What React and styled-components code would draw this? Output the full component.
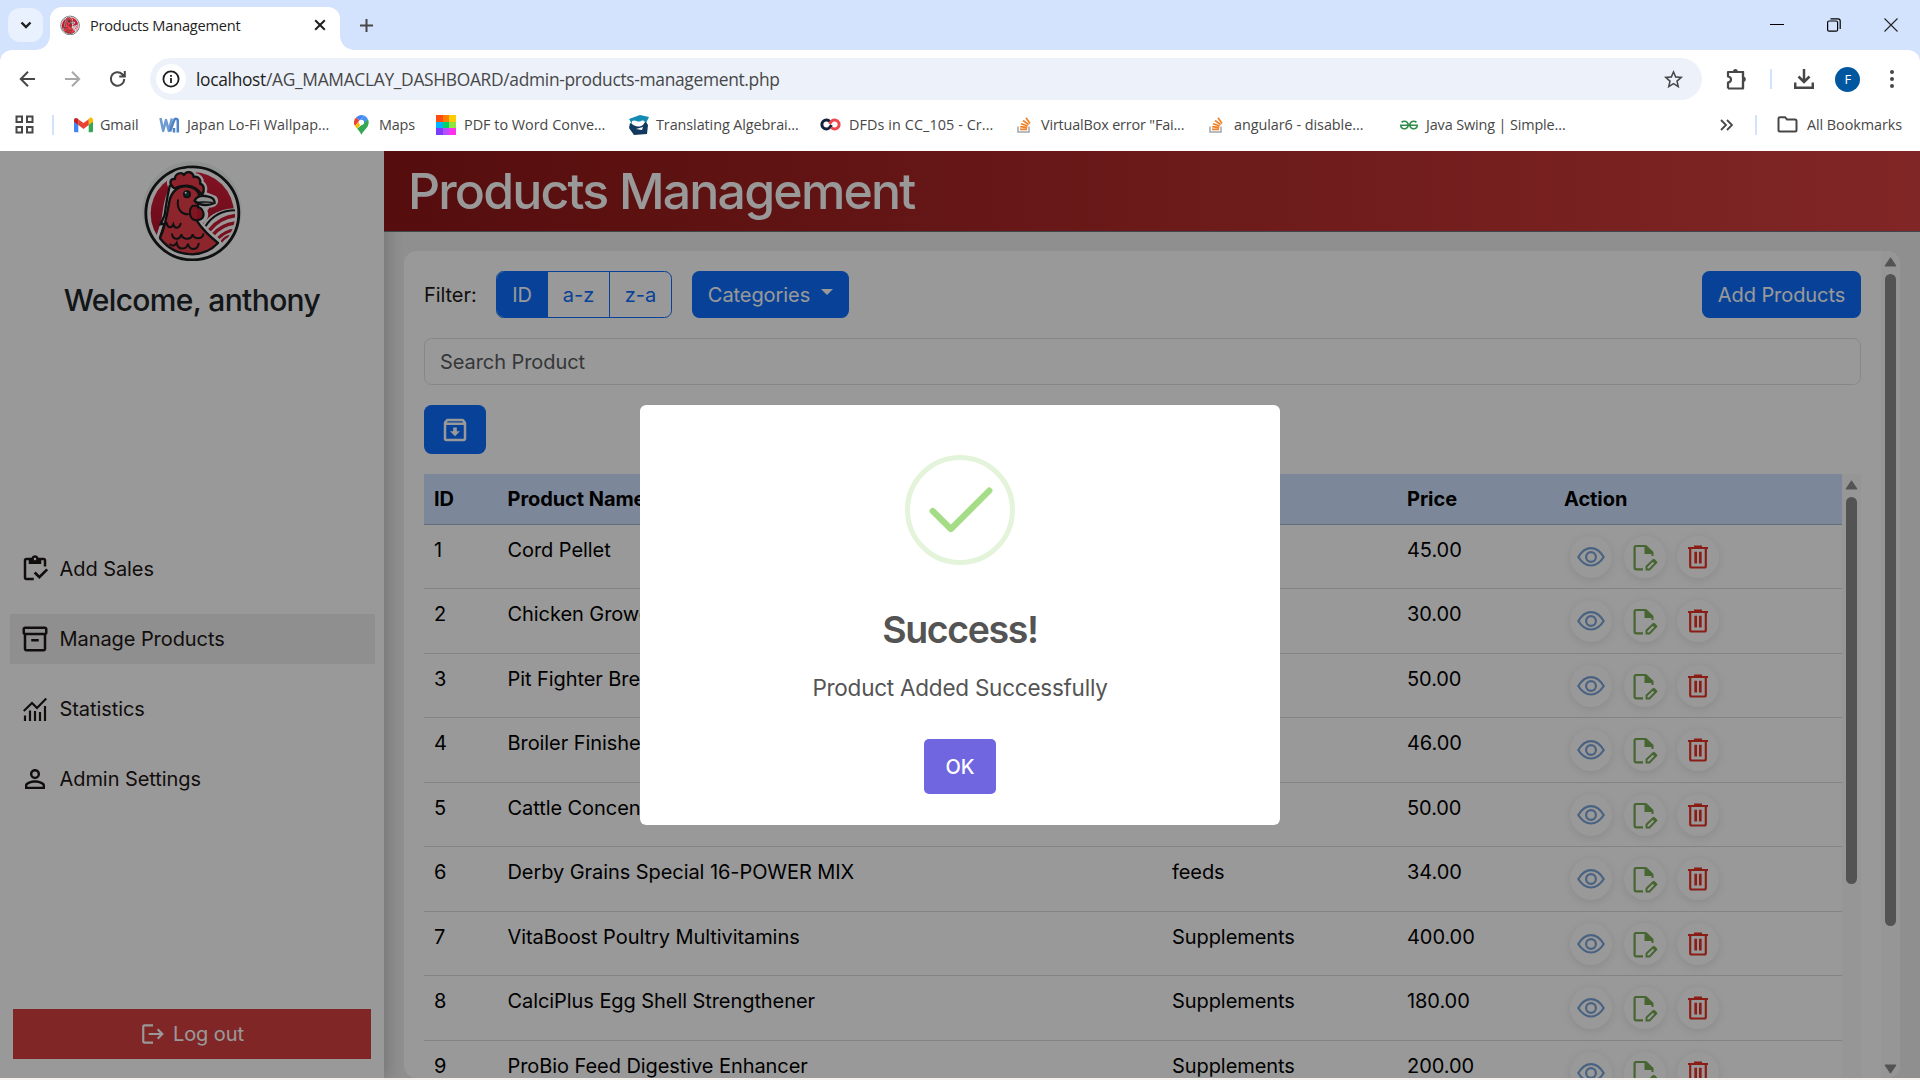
import React from "react";
import styled, { createGlobalStyle, css } from "styled-components";
import {
  MdOutlineInventory,
  MdOutlineInventory2,
  MdPersonOutline,
  MdOutlineArchive,
  MdLogout,
  MdStarBorder,
} from "react-icons/md";
import { SiGeeksforgeeks } from "react-icons/si";

const Global = createGlobalStyle`
  *, *::before, *::after { box-sizing: border-box; }
  body { margin: 0; overflow: hidden; background: #f5f1ee; }
  svg { display: block; flex: none; }
`;

const UI_FONT = '"Open Sans", "Noto Sans", sans-serif';

const Screen = styled.div`
  width: 1920px;
  height: 1080px;
  display: flex;
  flex-direction: column;
  overflow: hidden;
`;

/* ---------- browser chrome ---------- */
const Chrome = styled.header`
  height: 151px;
  flex: none;
  background: #d3e3fd;
  font-family: ${UI_FONT};
  color: #1f1f1f;
`;
const TabStrip = styled.div`
  height: 50px;
  display: flex;
  align-items: center;
  padding-left: 8px;
`;
const TabSearch = styled.div`
  width: 35px;
  height: 34px;
  border-radius: 12px;
  background: #e9f1fe;
  display: grid;
  place-items: center;
`;
const Tab = styled.div`
  position: relative;
  align-self: flex-end;
  width: 290px;
  height: 43px;
  margin-left: 7px;
  padding: 0 14px 7px 10px;
  display: flex;
  align-items: center;
  gap: 10px;
  background: #fff;
  border-radius: 12px 12px 0 0;
  &::before,
  &::after {
    content: "";
    position: absolute;
    bottom: 0;
    width: 14px;
    height: 14px;
  }
  &::before {
    left: -14px;
    background: radial-gradient(circle at 0 0, transparent 13.5px, #fff 14px);
  }
  &::after {
    right: -14px;
    background: radial-gradient(circle at 100% 0, transparent 13.5px, #fff 14px);
  }
`;
const TabTitle = styled.span`
  flex: 1;
  font-size: 14.6px;
  letter-spacing: -0.22px;
  white-space: nowrap;
`;
const NewTab = styled.div`
  margin-left: 19px;
`;
const WindowButtons = styled.div`
  margin-left: auto;
  padding-right: 22px;
  display: flex;
  align-items: center;
  gap: 43px;
`;
const ChromeBody = styled.div`
  height: 101px;
  background: #fff;
  border-radius: 12px 12px 0 0;
`;
const Toolbar = styled.div`
  height: 58px;
  display: flex;
  align-items: center;
  padding: 0 18px 0 16px;
`;
const NavButtons = styled.div`
  width: 134px;
  display: flex;
  gap: 21px;
`;
const Omnibox = styled.div`
  width: 1552px;
  height: 42px;
  border-radius: 21px;
  background: #ecf1fa;
  display: flex;
  align-items: center;
  padding: 0 17px 0 6px;
`;
const SiteInfo = styled.div`
  width: 30px;
  height: 30px;
  border-radius: 50%;
  background: #fff;
  display: grid;
  place-items: center;
  margin-right: 10px;
`;
const Url = styled.span`
  flex: 1;
  font-size: 17.4px;
  letter-spacing: -0.32px;
  color: #474747;
  white-space: nowrap;
  b {
    font-weight: 400;
    color: #1f1f1f;
  }
`;
const ToolbarRight = styled.div`
  flex: 1;
  display: flex;
  align-items: center;
  justify-content: space-between;
  padding-left: 22px;
`;
const Separator = styled.i`
  width: 2px;
  height: 20px;
  background: #d3e3fd;
`;
const Avatar = styled.div`
  width: 25px;
  height: 25px;
  border-radius: 50%;
  background: #00579f;
  color: #fff;
  font-size: 13px;
  display: grid;
  place-items: center;
`;
const Bookmarks = styled.nav`
  height: 33px;
  display: flex;
  align-items: center;
  padding: 0 18px 0 15px;
  font-size: 14.4px;
  color: #474747;
`;
const AppsArea = styled.div`
  width: 59px;
  display: flex;
  align-items: center;
  gap: 18px;
`;
const Bookmark = styled.div`
  width: ${(p) => p.$w}px;
  display: flex;
  align-items: center;
  white-space: nowrap;
  letter-spacing: ${(p) => p.$spacing}px;
`;
const BookmarkIcon = styled.span`
  width: ${(p) => p.$w}px;
`;
const BookmarksEnd = styled.div`
  margin-left: auto;
  display: flex;
  align-items: center;
  white-space: nowrap;
  letter-spacing: -0.07px;
  svg:first-child { margin-right: 22px; }
  ${Separator} { margin-right: 20px; }
  span { margin-left: 9px; }
`;

/* ---------- page ---------- */
const Page = styled.div`
  position: relative;
  height: 927px;
  flex: none;
  display: flex;
  overflow: hidden;
  background: #eee;
  font-family: Inter, "Liberation Sans", sans-serif;
  font-size: 20px;
  line-height: 30px;
  letter-spacing: -0.07px;
  color: #1d1616;
`;
const Sidebar = styled.aside`
  width: 384px;
  flex: none;
  background: #fff;
  box-shadow: 3px 0 15px rgba(0, 0, 0, 0.2);
  display: flex;
  flex-direction: column;
  align-items: center;
  padding: 10px 0 19px;
`;
const Welcome = styled.h4`
  margin: 21px 0 0;
  font-size: 30px;
  line-height: 36px;
  letter-spacing: -0.64px;
  font-weight: 500;
  color: #212529;
`;
const Menu = styled.nav`
  width: 365px;
  margin-top: 226px;
  display: flex;
  flex-direction: column;
  gap: 20px;
`;
const MenuItem = styled.a`
  height: 50px;
  display: flex;
  align-items: center;
  gap: 10px;
  padding-left: 10px;
  background: ${(p) => (p.$active ? "#eee" : "transparent")};
`;
const MenuIcon = styled.span`
  width: 30px;
  display: grid;
  place-items: center;
`;
const Logout = styled.a`
  width: 358px;
  height: 50px;
  margin-top: auto;
  background: #d84040;
  color: #fff;
  display: flex;
  align-items: center;
  justify-content: center;
  gap: 7px;
`;
const Main = styled.main`
  flex: 1;
  display: flex;
  flex-direction: column;
`;
const Banner = styled.div`
  position: relative;
  height: 81px;
  flex: none;
  padding-left: 24px;
  border-bottom: 1px solid #6c757d;
  background: linear-gradient(90deg, #8e1616, #d84040);
  color: #fff;
`;
const BannerTitle = styled.h1`
  margin: 10px 0 0;
  font-size: 50px;
  line-height: 60px;
  letter-spacing: -1.82px;
  font-weight: 500;
`;
const Card = styled.section`
  height: 827px;
  margin: 19px 20px 0;
  border-radius: 12.5px;
  background: #fff;
  display: flex;
  overflow: hidden;
`;
const CardBody = styled.div`
  flex: 1;
  padding: 20px 20px 0;
  display: flex;
  flex-direction: column;
  gap: 20px;
`;
const FilterBar = styled.div`
  height: 47px;
  display: flex;
  align-items: center;
`;
const blueButton = css`
  background: #0d6efd;
  color: #fff;
  border-radius: 7.5px;
  display: flex;
  align-items: center;
  justify-content: center;
`;
const ButtonGroup = styled.div`
  width: 176px;
  height: 47px;
  margin: 0 20px;
  display: flex;
  border: 1px solid #0d6efd;
  border-radius: 7.5px;
  overflow: hidden;
`;
const GroupButton = styled.span`
  width: ${(p) => p.$w}px;
  display: grid;
  place-items: center;
  background: ${(p) => (p.$active ? "#0d6efd" : "transparent")};
  color: ${(p) => (p.$active ? "#fff" : "#0d6efd")};
  & + & { border-left: 1px solid #0d6efd; }
`;
const FilterLabel = styled.span`
  width: 52px;
`;
const Categories = styled.div`
  ${blueButton}
  width: 157px;
  height: 47px;
  gap: 11px;
  &::after {
    content: "";
    margin-top: -5px;
    border: 6px solid transparent;
    border-top-color: #fff;
    border-bottom: 0;
  }
`;
const AddProducts = styled.div`
  ${blueButton}
  width: 159px;
  height: 47px;
  margin-left: auto;
`;
const Search = styled.div`
  height: 47px;
  border: 1px solid #dee2e6;
  border-radius: 7.5px;
  padding: 8px 15px;
  color: #595c5f;
`;
const ArchiveButton = styled.div`
  ${blueButton}
  width: 62px;
  height: 49px;
`;
const TableArea = styled.div`
  flex: 1;
  display: flex;
  min-height: 0;
  color: #000;
`;
const Table = styled.div`
  flex: 1;
`;
const Row = styled.div`
  height: ${(p) => (p.$head ? 50.5 : 64.55)}px;
  display: grid;
  grid-template-columns: 73.5px 664.5px 235px 157px 1fr;
  padding-top: 10px;
  border-bottom: 1px solid ${(p) => (p.$head ? "#a6b5cc" : "#d8dde2")};
  background: ${(p) => (p.$head ? "#cfe2ff" : "transparent")};
  font-weight: ${(p) => (p.$head ? 700 : 400)};
`;
const Cell = styled.div`
  padding-left: 10px;
  height: 30px;
  white-space: nowrap;
`;
const Actions = styled.div`
  display: flex;
  gap: 11.5px;
  padding: 1px 0 0 16px;
`;
const RoundAction = styled.span`
  width: 42px;
  height: 42px;
  border-radius: 50%;
  background: #fff;
  box-shadow: 0 2px 10px rgba(0, 0, 0, 0.1);
  display: grid;
  place-items: center;
`;
const Scrollbar = styled.div`
  width: 19px;
  flex: none;
  background: #fafafa;
  display: flex;
  flex-direction: column;
  align-items: center;
  padding: ${(p) => p.$pt}px 0 4px;
`;
const Thumb = styled.i`
  width: 11px;
  height: ${(p) => p.$h}px;
  margin-top: 7px;
  margin-bottom: auto;
  border-radius: 6px;
  background: #8b8b8b;
`;

/* ---------- dialog ---------- */
const Backdrop = styled.div`
  position: absolute;
  inset: 0;
  background: rgba(0, 0, 0, 0.4);
  display: flex;
  justify-content: center;
  align-items: flex-start;
  padding-top: 254px;
`;
const Dialog = styled.div`
  width: 640px;
  height: 420px;
  padding-top: 50px;
  border-radius: 6.25px;
  background: #fff;
  color: #545454;
  display: flex;
  flex-direction: column;
  align-items: center;
`;
const DialogTitle = styled.h2`
  margin: 42px 0 0;
  font-size: 37.5px;
  line-height: 45px;
  letter-spacing: -1.35px;
  font-weight: 600;
`;
const DialogText = styled.p`
  margin: 19px 0 0;
  font-size: 22.5px;
  line-height: 34px;
  letter-spacing: -0.24px;
`;
const OkButton = styled.div`
  width: 72px;
  height: 55px;
  margin-top: 34px;
  border-radius: 5px;
  background: #7066e0;
  color: #fff;
  font-weight: 500;
  display: grid;
  place-items: center;
`;

/* ---------- drawings ---------- */
const Rooster = ({ size }) => (
  <svg width={size} height={size} viewBox="66 18 300 300">
    <defs>
      <clipPath id="disc"><circle cx="217" cy="176" r="129" /></clipPath>
      <linearGradient id="redBg" x1="0" y1="0" x2="0" y2="1">
        <stop offset="0" stopColor="#d81f3c" />
        <stop offset="1" stopColor="#a80f26" />
      </linearGradient>
    </defs>
    <circle cx="216" cy="168" r="149" fill="#f0f2f2" />
    <circle cx="217" cy="175" r="139.500" fill="#fff" stroke="#191c1d" strokeWidth="8.500" />
    <circle cx="217" cy="176" r="125" fill="url(#redBg)" />
    <g clipPath="url(#disc)">
      <path d="M232 250C244 190 290 160 352 160V250L296 290Z" fill="#fff" />
      <path d="M256 214C276 184 306 166 345 166" fill="none" stroke="#191c1d" strokeWidth="6" />
      <g fill="none" stroke="#c81c36" strokeWidth="11">
        <path d="M268 226C286 204 310 186 345 182" />
        <path d="M278 240C294 221 314 208 345 204" />
        <path d="M294 250C306 239 320 228 340 226" strokeWidth="9" />
        <path d="M304 260C312 250 322 243 334 242" strokeWidth="7" />
      </g>
    </g>
    <path d="M160 98C146 86 150 70 165 72C165 54 185 50 192 60C200 46 219 50 221 66C234 62 244 74 240 86C254 90 254 108 246 118L282 132C288 144 276 148 262 148C258 158 250 160 252 170C258 184 250 197 232 198C250 228 274 246 292 260L270 286L217 298L160 285L118 250L134 200C140 170 138 135 160 98Z" stroke="#fff" strokeWidth="21" strokeLinejoin="round" fill="#fff" />
    <path d="M150 90C142 120 138 150 134 180L122 208L134 206L120 248" fill="none" stroke="#191c1d" strokeWidth="7" />
    <g stroke="#191c1d" strokeWidth="7" strokeLinejoin="round">
      <path d="M120 250C136 214 142 176 148 140C154 108 176 92 200 94C224 96 236 108 240 126L226 190C246 224 270 244 294 264C270 290 245 297 217 298C178 296 148 286 120 250Z" fill="#ec3f4a" />
      <path d="M160 98C146 86 150 70 165 72C165 54 185 50 192 60C200 46 219 50 221 66C234 62 244 74 240 86C254 90 254 108 246 120C236 104 222 94 202 92C186 92 174 94 166 100Z" fill="#ee3b49" />
      <path d="M224 136C232 122 246 120 262 124C276 126 284 134 284 144C268 152 244 154 224 138Z" fill="#eee" />
      <path d="M226 144C244 138 262 142 278 142" fill="none" strokeWidth="4" />
      <path d="M218 152C204 164 208 192 226 196C242 196 240 166 232 152Z" fill="#d62438" strokeWidth="6" />
      <path d="M234 156C246 158 256 176 248 188C244 194 238 196 232 194" fill="#c41b31" strokeWidth="6" />
    </g>
    <circle cx="201" cy="118" r="12" fill="#191c1d" />
    <circle cx="201" cy="118" r="7" fill="#173c42" />
    <circle cx="197" cy="113" r="3" fill="#fff" />
    <g fill="none" stroke="#191c1d" strokeWidth="6" strokeLinecap="round">
      <path d="M174 136C170 158 182 178 204 178" />
      <path d="M140 204C142 218 154 222 160 208C164 224 178 220 182 206" />
      <path d="M156 238C160 256 180 256 184 238C188 256 214 256 218 238C222 254 246 254 250 238" />
      <path d="M150 268C156 274 166 272 170 264C174 286 200 286 204 266C208 288 234 286 236 266" />
    </g>
  </svg>
);

const Stroke = ({ w, h, sw = 2, color = "#474747", children, ...rest }) => (
  <svg width={w} height={h} viewBox={`0 0 ${w} ${h}`} fill="none" stroke={color} strokeWidth={sw} {...rest}>
    {children}
  </svg>
);

const Gmail = () => (
  <svg width="19" height="16" viewBox="0 0 19 16">
    <path d="M0 3V14a1.3 1.3 0 0 0 1.3 1.3H4.3V6Z" fill="#4285f4" />
    <path d="M19 3V14a1.3 1.3 0 0 1-1.3 1.3H14.7V6Z" fill="#34a853" />
    <path d="M14.7 2.2V8L19 4.8V3c0-2.2-2-3.2-3.6-2Z" fill="#fbbc04" />
    <path d="M4.3 8V2.2L9.5 6l5.2-3.8V8L9.5 12Z" fill="#ea4335" />
    <path d="M0 3V4.8L4.3 8V2.2L3.6 1.6C2 .4 0 1.300 0 3Z" fill="#c5221f" />
  </svg>
);
const WaveMark = () => (
  <Stroke w={21} h={16} sw={2.500} color="#6f9bd0" strokeLinejoin="round">
    <path d="M1.500 1L4.200 14L7 3L9.800 14L12.800 1.500" />
    <path d="M11 14.500L15 3.500C16 1 18.800 1.500 18.800 4V15.500M15 11V15.500" stroke="#4c84c6" />
  </Stroke>
);
const MapPin = () => (
  <svg width="15" height="20" viewBox="0 0 15 20">
    <path d="M7.500 0A7.200 7.200 0 0 0 2 2.600L5.500 5.500 10 .5A7 7 0 0 0 7.500 0Z" fill="#4285f4" />
    <path d="M2 2.600A7.200 7.200 0 0 0 1 11L5.500 5.500Z" fill="#ea4335" />
    <path d="M10 .5L5 6A3 3 0 0 1 10 9L14 4.500A7 7 0 0 0 10 .5Z" fill="#4a90f5" />
    <path d="M1 11L5.400 6A3 3 0 0 0 6.500 9.800L3.200 13.800Z" fill="#fbbc04" />
    <path d="M14 4.500L3.200 13.800C5 16 6.500 17.500 7.400 20C8.500 16 14.700 13 14.700 7.200A7 7 0 0 0 14 4.500Z" fill="#34a853" />
    <circle cx="7.400" cy="7.300" r="2.600" fill="#fff" />
  </svg>
);
const ColorGrid = () => (
  <svg width="20" height="20" viewBox="0 0 20 20" shapeRendering="crispEdges">
    {["#ff4b0f", "#ff8000", "#ffcc00", "#00b4ff", "#00d26a", "#8ee53f", "#7a3cff", "#b84dff", "#ff33ee"].map((c, i) => (
      <rect key={c} x={(i % 3) * 6.67} y={Math.floor(i / 3) * 6.67} width="6.8" height="6.8" fill={c} />
    ))}
  </svg>
);
const CapMark = () => (
  <svg width="22" height="20" viewBox="0 0 22 20">
    <path d="M1 4L12 0L21 2L18 8L4 9Z" fill="#128bb5" />
    <path d="M2 8C5 10 12 10 18 7L20 10L19 19L6 20L1 13Z" fill="#123a5e" />
    <path d="M4 6C8 4 9 8 13 6C15 5 16 6 17 7L15 10C10 13 7 11 4 9Z" fill="#fff" />
    <path d="M8 14L15 12L14 15Z" fill="#fff" />
  </svg>
);
const Loops = () => (
  <Stroke w={21} h={13} sw={3}>
    <path d="M9.800 3.600A4.500 4.500 0 1 0 9.800 9.400L11.500 7" stroke="#13233c" />
    <path d="M11.200 9.400A4.500 4.500 0 1 0 11.200 3.600L9.500 6" stroke="#f0464e" />
  </Stroke>
);
const StackMark = () => (
  <Stroke w={15} h={17} sw={1.700} color="#f48024">
    <path d="M1 10.500V16H12V10.500" stroke="#9fa6ad" strokeWidth="1.500" />
    <path d="M3 13.300H10M3.200 10.600L10.200 11.600M4 7.700L10.600 10M6 4.500L11.700 8.600M9 1.800L13 7.500" />
  </Stroke>
);

const StatsIcon = () => (
  <Stroke w={24} h={24} color="currentColor" sw={2.200}>
    <path d="M.700 14L9 6L14 11L23.300 1.500" />
    <path d="M2 24V18.500M7 24V13.500M12 24V14M17 24V15M22 24V9" />
  </Stroke>
);
const EyeIcon = () => (
  <Stroke w={28} h={20} sw={2.200} color="#7ba4d9">
    <path d="M1.300 10C5 4 9 1.200 14 1.200S23 4 26.700 10C23 16 19 18.500 14 18.500S5 16 1.300 10Z" />
    <circle cx="14" cy="10" r="4.900" />
  </Stroke>
);
const EditDrawing = styled(Stroke)`
  margin: 2px 0 0 1px;
`;
const EditIcon = () => (
  <EditDrawing w={26} h={28} sw={2.200} color="#75a850">
    <path d="M11 25.300H4Q2.600 25.300 2.600 24V3.500Q2.600 2 4 2H13.500" />
    <path d="M12.500 1.200H14.500L21.500 8V12H19.500V10H12.500Z" fill="#75a850" stroke="none" />
    <path d="M14.500 25.500V22.500L21.300 16L24.200 18.500L17.500 25.500Z" strokeWidth="1.900" />
    <path d="M20 17L22.500 15L25 17.500L23 20Z" fill="#75a850" stroke="none" />
  </EditDrawing>
);
const TrashIcon = () => (
  <Stroke w={20} h={24} sw={2.200} color="#e63225">
    <path d="M0 3H20M6 1.500H14" />
    <path d="M2.200 3V21Q2.200 22.500 3.800 22.500H16.200Q17.800 22.500 17.800 21V3" />
    <path d="M7.700 6.800V18.500M12.300 6.800V18.500" strokeWidth="2.700" />
  </Stroke>
);
const UpArrow = () => (
  <svg width="13" height="10" viewBox="0 0 13 10"><path d="M6.500 .8L12 9H1Z" fill="#8b8b8b" stroke="#8b8b8b" strokeLinejoin="round" /></svg>
);
const DownArrow = () => (
  <svg width="13" height="10" viewBox="0 0 13 10"><path d="M6.500 9.200L12 1H1Z" fill="#8b8b8b" stroke="#8b8b8b" strokeLinejoin="round" /></svg>
);

const bookmarks = [
  { label: "Gmail", w: 85, iw: 26, ls: -0.1, icon: <Gmail /> },
  { label: "Japan Lo-Fi Wallpap...", w: 195, iw: 28, ls: 0, icon: <WaveMark /> },
  { label: "Maps", w: 82, iw: 25, ls: -0.2, icon: <MapPin /> },
  { label: "PDF to Word Conve...", w: 192, iw: 28, ls: 0, icon: <ColorGrid /> },
  { label: "Translating Algebrai...", w: 192, iw: 28, ls: -0.08, icon: <CapMark /> },
  { label: "DFDs in CC_105 - Cr...", w: 197, iw: 29, ls: 0.08, icon: <Loops /> },
  { label: 'VirtualBox error "Fai...', w: 192, iw: 24, ls: -0.16, icon: <StackMark /> },
  { label: "angular6 - disable...", w: 191, iw: 25, ls: -0.05, icon: <StackMark /> },
  { label: "Java Swing | Simple...", w: 170, iw: 26, ls: -0.12, icon: <SiGeeksforgeeks size={18} color="#2f8d46" /> },
];

const products = [
  ["Cord Pellet", "feeds", "45.00"],
  ["Chicken Grower", "feeds", "30.00"],
  ["Pit Fighter Breeder", "feeds", "50.00"],
  ["Broiler Finisher", "feeds", "46.00"],
  ["Cattle Concentrate", "feeds", "50.00"],
  ["Derby Grains Special 16-POWER MIX", "feeds", "34.00"],
  ["VitaBoost Poultry Multivitamins", "Supplements", "400.00"],
  ["CalciPlus Egg Shell Strengthener", "Supplements", "180.00"],
  ["ProBio Feed Digestive Enhancer", "Supplements", "200.00"],
];

const menu = [
  ["Add Sales", <MdOutlineInventory size={30} />],
  ["Manage Products", <MdOutlineInventory2 size={30} />],
  ["Statistics", <StatsIcon />],
  ["Admin Settings", <MdPersonOutline size={30} />],
];

export default function App() {
  return (
    <Screen>
      <Global />
      <Chrome>
        <TabStrip>
          <TabSearch>
            <Stroke w={12} h={8} sw={2.400} color="#1f1f1f"><path d="M1.500 1.500L6 6L10.500 1.500" /></Stroke>
          </TabSearch>
          <Tab>
            <Rooster size={20} />
            <TabTitle>Products Management</TabTitle>
            <Stroke w={12} h={12} color="#1f1f1f"><path d="M1.200 1.200L10.800 10.800M10.800 1.200L1.200 10.800" /></Stroke>
          </Tab>
          <NewTab>
            <Stroke w={15} h={15}><path d="M7.500 1V14M1 7.500H14" /></Stroke>
          </NewTab>
          <WindowButtons>
            <Stroke w={14} h={14} sw={1} color="#000"><path d="M0 6.500H14" /></Stroke>
            <Stroke w={14} h={14} sw={1.200} color="#000">
              <rect x=".6" y="3" width="10" height="10.200" rx="1.500" />
              <path d="M3.500 .8H11Q13.200 .8 13.200 3V11" />
            </Stroke>
            <Stroke w={14} h={14} sw={1.100} color="#222"><path d="M.5 .5L13.500 13.500M13.500 .5L.5 13.500" /></Stroke>
          </WindowButtons>
        </TabStrip>
        <ChromeBody>
          <Toolbar>
            <NavButtons>
              <Stroke w={24} h={24}><path d="M19 12H5M12 4.800L4.800 12L12 19.200" /></Stroke>
              <Stroke w={24} h={24} color="#a8a8a8"><path d="M4 12H18M11 4.800L18.200 12L11 19.200" /></Stroke>
              <Stroke w={24} h={24}><path d="M18.200 12A6.700 6.700 0 1 1 16.300 7.300L18 9M18.800 4V9.600H13.200" /></Stroke>
            </NavButtons>
            <Omnibox>
              <SiteInfo>
                <Stroke w={18} h={18} sw={1.800} color="#1f1f1f">
                  <circle cx="9" cy="9" r="7.600" />
                  <path d="M9 8V13M9 5V6.800" />
                </Stroke>
              </SiteInfo>
              <Url><b>localhost</b>/AG_MAMACLAY_DASHBOARD/admin-products-management.php</Url>
              <MdStarBorder size={23} color="#474747" />
            </Omnibox>
            <ToolbarRight>
              <Stroke w={24} h={24} sw={2.200}>
                <path d="M4 21.500V15.500C8 15 8 10 4 9.500V5H9.500M13 5H19V10.500M19 14V21.500H4" strokeLinejoin="round" />
                <path d="M8.500 5H19V21.500" />
                <path d="M8.800 5C8.800 1 14 1 14 5ZM19 9.500C22.800 9.500 22.800 15 19 15Z" fill="#474747" stroke="none" />
              </Stroke>
              <Separator />
              <Stroke w={20} h={20} sw={2.500}>
                <path d="M10 0V12.500M4.500 7.500L10 13L15.500 7.500M1.200 13.500V18.700H18.800V13.500" />
              </Stroke>
              <Avatar>F</Avatar>
              <svg width="20" height="20" viewBox="0 0 20 20" fill="#474747">
                <circle cx="10" cy="3" r="2" /><circle cx="10" cy="10" r="2" /><circle cx="10" cy="17" r="2" />
              </svg>
            </ToolbarRight>
          </Toolbar>
          <Bookmarks>
            <AppsArea>
              <Stroke w={19} h={19}>
                <path d="M1.500 1.500H7V7H1.500ZM12 1.500H17.500V7H12ZM1.500 12H7V17.500H1.500ZM12 12H17.500V17.500H12Z" />
              </Stroke>
              <Separator />
            </AppsArea>
            {bookmarks.map((b) => (
              <Bookmark key={b.label} $w={b.w} $spacing={b.ls}>
                <BookmarkIcon $w={b.iw}>{b.icon}</BookmarkIcon>
                {b.label}
              </Bookmark>
            ))}
            <BookmarksEnd>
              <Stroke w={13} h={12} sw={1.800}><path d="M1 1L6 6L1 11M7 1L12 6L7 11" /></Stroke>
              <Separator />
              <Stroke w={21} h={17}><path d="M1.500 14V2.500Q1.500 1.200 3 1.200H8L10 3.500H18Q19.500 3.500 19.500 5V14Q19.500 15.500 18 15.500H3Q1.500 15.500 1.500 14Z" /></Stroke>
              <span>All Bookmarks</span>
            </BookmarksEnd>
          </Bookmarks>
        </ChromeBody>
      </Chrome>

      <Page>
        <Sidebar>
          <Rooster size={100} />
          <Welcome>Welcome, anthony</Welcome>
          <Menu>
            {menu.map(([label, icon], i) => (
              <MenuItem key={label} $active={i === 1}>
                <MenuIcon>{icon}</MenuIcon>
                {label}
              </MenuItem>
            ))}
          </Menu>
          <Logout><MdLogout size={26} />Log out</Logout>
        </Sidebar>
        <Main>
          <Banner><BannerTitle>Products Management</BannerTitle></Banner>
          <Card>
            <CardBody>
              <FilterBar>
                <FilterLabel>Filter:</FilterLabel>
                <ButtonGroup>
                  <GroupButton $w={50} $active>ID</GroupButton>
                  <GroupButton $w={62}>a-z</GroupButton>
                  <GroupButton $w={62}>z-a</GroupButton>
                </ButtonGroup>
                <Categories>Categories</Categories>
                <AddProducts>Add Products</AddProducts>
              </FilterBar>
              <Search>Search Product</Search>
              <ArchiveButton><MdOutlineArchive size={30} /></ArchiveButton>
              <TableArea>
                <Table>
                  <Row $head>
                    <Cell>ID</Cell>
                    <Cell>Product Name</Cell>
                    <Cell>Category</Cell>
                    <Cell>Price</Cell>
                    <Cell>Action</Cell>
                  </Row>
                  {products.map(([name, category, price], i) => (
                    <Row key={name}>
                      <Cell>{i + 1}</Cell>
                      <Cell>{name}</Cell>
                      <Cell>{category}</Cell>
                      <Cell>{price}</Cell>
                      <Actions>
                        <RoundAction><EyeIcon /></RoundAction>
                        <RoundAction><EditIcon /></RoundAction>
                        <RoundAction><TrashIcon /></RoundAction>
                      </Actions>
                    </Row>
                  ))}
                </Table>
                <Scrollbar $pt={6}>
                  <UpArrow />
                  <Thumb $h={387} />
                </Scrollbar>
              </TableArea>
            </CardBody>
            <Scrollbar $pt={6}>
              <UpArrow />
              <Thumb $h={652} />
              <DownArrow />
            </Scrollbar>
          </Card>
        </Main>
        <Backdrop>
          <Dialog>
            <svg width="110" height="110" viewBox="0 0 110 110" fill="none">
              <circle cx="55" cy="55" r="52.5" stroke="#e4f4db" strokeWidth="5" />
              <path d="M27.700 56L45.900 74L84.300 35.600" stroke="#a5dc86" strokeWidth="6.250" strokeLinecap="round" strokeLinejoin="round" />
            </svg>
            <DialogTitle>Success!</DialogTitle>
            <DialogText>Product Added Successfully</DialogText>
            <OkButton>OK</OkButton>
          </Dialog>
        </Backdrop>
      </Page>
    </Screen>
  );
}
